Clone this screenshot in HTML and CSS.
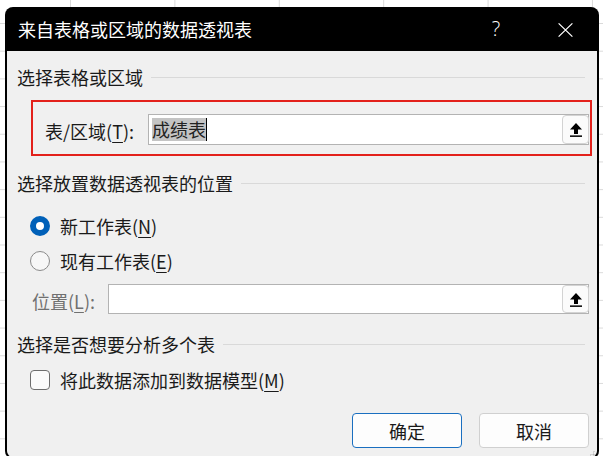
FILE: index.html
```html
<!DOCTYPE html>
<html lang="zh-CN">
<head>
<meta charset="utf-8">
<title>来自表格或区域的数据透视表</title>
<link rel="stylesheet" href="styles.css">
</head>
<body>
<div class="dialog">
  <div class="titlebar">
    <span class="title">来自表格或区域的数据透视表</span>
    <span class="help">?</span>
    <svg class="close" width="15" height="14" viewBox="0 0 15 14"><path d="M0.6 0.4 L14.4 13.6 M14.4 0.4 L0.6 13.6" stroke="#fff" stroke-width="1.2" fill="none"/></svg>
  </div>
  <div class="content">
    <div class="group-head"><span>选择表格或区域</span><span class="rule"></span></div>
    <div class="highlight">
      <span class="field-label">表/区域(<u>T</u>):</span>
      <div class="input">
        <span class="sel">成绩表</span><span class="caret"></span>
        <span class="ref-btn"><svg width="12" height="14" viewBox="0 0 12 14"><path d="M6 0 L12 6.5 L8 6.5 L8 11 L4 11 L4 6.5 L0 6.5 Z" fill="#000"/><rect x="0" y="12.4" width="12" height="1.5" fill="#000"/></svg></span>
      </div>
    </div>
    <div class="group-head g2"><span>选择放置数据透视表的位置</span><span class="rule"></span></div>
    <div class="option o1"><span class="radio on"></span>新工作表(<u>N</u>)</div>
    <div class="option o2"><span class="radio"></span>现有工作表(<u>E</u>)</div>
    <div class="loc-row">
      <span class="loc-label">位置(<u>L</u>):</span>
      <div class="input loc-input">
        <span class="ref-btn"><svg width="12" height="14" viewBox="0 0 12 14"><path d="M6 0 L12 6.5 L8 6.5 L8 11 L4 11 L4 6.5 L0 6.5 Z" fill="#000"/><rect x="0" y="12.4" width="12" height="1.5" fill="#000"/></svg></span>
      </div>
    </div>
    <div class="group-head g3"><span>选择是否想要分析多个表</span><span class="rule"></span></div>
    <div class="option o3"><span class="checkbox"></span>将此数据添加到数据模型(<u>M</u>)</div>
    <div class="buttons">
      <span class="btn primary">确定</span>
      <span class="btn">取消</span>
    </div>
  </div>
  <span class="grip"></span>
</div>
</body>
</html>
```
FILE: styles.css
```css
html, body {
  margin: 0;
  padding: 0;
}
body {
  width: 603px;
  height: 456px;
  overflow: hidden;
  background-color: #fff;
  background-image:
    linear-gradient(to right, #dadada 1px, transparent 1px),
    linear-gradient(to bottom, #dadada 1px, transparent 1px);
  background-size: 104.4px 27.7px;
  background-position: 70px 23px;
  font-family: "Noto Sans CJK SC", "Noto Sans", sans-serif;
  font-size: 18px;
  color: #1a1a1a;
}
.dialog {
  position: relative;
  box-sizing: border-box;
  margin: 7px 0 0 5px;
  width: 594px;
  height: 452px;
  background: #000;
  border-radius: 8px;
  padding: 0 2px 2px 2px;
  display: flex;
  flex-direction: column;
  overflow: hidden;
}
.titlebar {
  height: 44px;
  flex: none;
  display: flex;
  align-items: center;
  padding-left: 11px;
  color: #fff;
}
.title {
  font-size: 18px;
  line-height: 24px;
}
.help {
  margin-left: auto;
  width: 20px;
  text-align: center;
  font-family: "Open Sans", "Noto Sans", sans-serif;
  font-weight: 300;
  font-size: 20px;
  line-height: 24px;
}
.close {
  margin-left: 52px;
  margin-right: 24px;
  margin-top: 1px;
}
.content {
  flex: 1;
  background: #f0f0f0;
  border-radius: 0 0 6px 6px;
  display: flex;
  flex-direction: column;
}
.group-head {
  display: flex;
  align-items: center;
  height: 24px;
  line-height: 24px;
  margin-top: 14px;
  padding-left: 10px;
  padding-right: 12px;
}
.group-head .rule {
  flex: 1;
  height: 1px;
  background: #d9d9d9;
  margin-left: 8px;
}
.group-head.g2 { margin-top: 15px; }
.group-head.g3 { margin-top: 18px; }
.highlight {
  margin: 11px 5px 0 24px;
  height: 56px;
  box-sizing: border-box;
  border: 2px solid #e3211b;
  padding: 12px 1px 9px 12px;
  display: flex;
  align-items: center;
}
.field-label {
  width: 103px;
  flex: none;
  line-height: 24px;
  margin-top: 2px;
}
u {
  text-decoration-thickness: 1px;
  text-underline-offset: 3px;
}
.input {
  flex: 1;
  height: 31px;
  box-sizing: border-box;
  border: 1px solid #b3b3b3;
  background: #fff;
  display: flex;
  align-items: center;
  padding-left: 3px;
}
.sel {
  background: #c4c4c4;
  line-height: 23px;
  height: 23px;
  color: #222;
}
.caret {
  width: 1px;
  height: 23px;
  background: #000;
}
.ref-btn {
  margin-left: auto;
  width: 27px;
  height: 29px;
  box-sizing: border-box;
  border: 1px solid #d3d3d3;
  border-radius: 4px;
  background: #fbfbfb;
  display: flex;
  align-items: center;
  justify-content: center;
  margin-right: -1px;
}
.ref-btn svg { margin-top: 1px; }
.option {
  display: flex;
  align-items: center;
  height: 24px;
  line-height: 24px;
  padding-left: 23px;
  margin-top: 19px;
}
.option.o2 { margin-top: 11px; }
.option.o3 { margin-top: 12px; }
.radio {
  width: 20px;
  height: 20px;
  box-sizing: border-box;
  border-radius: 50%;
  border: 1px solid #8a8a8a;
  background: #f7f7f7;
  margin-right: 10px;
  flex: none;
}
.radio.on {
  border: 6px solid #0060b8;
  background: #fff;
}
.checkbox {
  width: 20px;
  height: 20px;
  box-sizing: border-box;
  border-radius: 4px;
  border: 1px solid #6e6e6e;
  background: #fbfbfb;
  margin-right: 10px;
  flex: none;
}
.loc-row {
  display: flex;
  align-items: center;
  margin-top: 11px;
  padding-left: 25px;
  padding-right: 8px;
}
.loc-label {
  width: 76px;
  flex: none;
  color: #707070;
  line-height: 24px;
  margin-top: 4px;
}
.loc-input {
  height: 30px;
}
.loc-input .ref-btn { height: 28px; }
.buttons {
  display: flex;
  justify-content: flex-end;
  gap: 17px;
  margin-top: 21px;
  padding-right: 8px;
}
.btn {
  width: 110px;
  height: 35px;
  box-sizing: border-box;
  border: 1px solid #d0d0d0;
  border-radius: 4px;
  background: #fdfdfd;
  display: flex;
  align-items: center;
  justify-content: center;
  line-height: 24px;
}
.btn.primary {
  border-color: #1a6fc0;
}
.grip {
  position: absolute;
  right: 4px;
  bottom: 3px;
  width: 6px;
  height: 6px;
  background:
    radial-gradient(circle, #b5b5b5 0.9px, transparent 1.1px) 0 0 / 3px 3px;
  clip-path: polygon(100% 0, 100% 100%, 0 100%);
}
```
